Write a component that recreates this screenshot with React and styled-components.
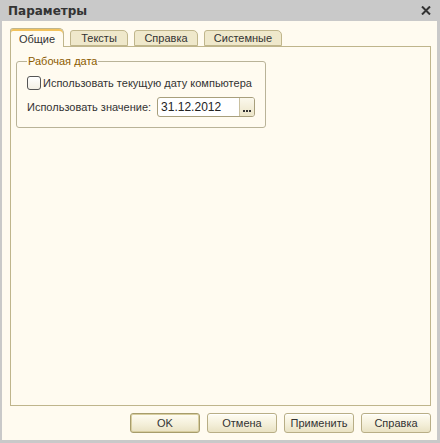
import React from "react";
import styled, { createGlobalStyle } from "styled-components";

const GlobalStyle = createGlobalStyle`
  html, body {
    margin: 0;
    padding: 0;
    background: #c9c9c9;
  }
  body {
    font-family: "Liberation Sans", sans-serif;
  }
`;

const Window = styled.div`
  width: 440px;
  height: 443px;
  box-sizing: border-box;
  display: flex;
  flex-direction: column;
  background: #c9c9c9;
  padding: 0 3px 3px 2px;
`;

const TitleBar = styled.div`
  height: 21px;
  display: flex;
  align-items: center;
  justify-content: space-between;
  padding: 0 6px 0 6px;
  font-family: "DejaVu Sans", sans-serif;
  font-weight: bold;
  font-size: 12px;
  color: #333;
`;

const Body = styled.div`
  flex: 1;
  display: flex;
  flex-direction: column;
  background: #fffbf0;
  padding: 7px 6px 0 8px;
`;

const TabRow = styled.div`
  display: flex;
  align-items: flex-end;
  gap: 6px;
  height: 18px;
  position: relative;
  z-index: 1;
`;

const Tab = styled.div`
  box-sizing: border-box;
  height: ${(p) => (p.$active ? "19px" : "16px")};
  margin-bottom: ${(p) => (p.$active ? "-1px" : "0")};
  width: ${(p) => p.$w}px;
  display: flex;
  align-items: center;
  justify-content: center;
  font-size: 11px;
  color: #333;
  border: 1px solid #c0b68c;
  border-bottom: ${(p) => (p.$active ? "none" : "1px solid #c0b68c")};
  border-radius: 3px 5px 0 0;
  background: ${(p) => (p.$active ? "#fffbf0" : "#efe8cb")};
  box-shadow: ${(p) => (p.$active ? "inset 0 2px 0 #f2c25c" : "none")};
  padding-top: ${(p) => (p.$active ? "1px" : "0")};
`;

const Page = styled.div`
  flex: 1;
  border: 1px solid #bfb58c;
  padding: 8px 0 0 5px;
`;

const Group = styled.fieldset`
  width: 250px;
  min-width: 0;
  box-sizing: border-box;
  margin: 0;
  padding: 9px 0 10px 10px;
  border: 1px solid #b9b398;
  border-radius: 3px;
  display: flex;
  flex-direction: column;
  gap: 7px;
`;

const Legend = styled.legend`
  padding: 0 1px;
  margin-left: 0;
  font-size: 11px;
  color: #8c5c00;
  line-height: 12px;
`;

const Row = styled.label`
  display: flex;
  align-items: center;
  white-space: nowrap;
  font-size: 11px;
  color: #333;
`;

const Box = styled.span`
  flex: none;
  width: 12px;
  height: 12px;
  border: 1px solid #555;
  border-radius: 3px;
  background: linear-gradient(#ffffff, #f3efe4);
  margin-right: 2px;
`;

const Field = styled.div`
  flex: none;
  display: flex;
  align-items: stretch;
  margin-left: 6px;
  width: 98px;
  height: 20px;
  box-sizing: border-box;
  border: 1px solid #a89f7c;
  border-radius: 3px;
  background: #fff;
  overflow: hidden;
`;

const FieldText = styled.span`
  flex: 1;
  display: flex;
  align-items: center;
  padding-left: 3px;
  font-size: 12px;
  color: #222;
`;

const Dots = styled.span`
  width: 15px;
  border-left: 1px solid #c9c0a0;
  background: linear-gradient(#fbf8ec, #ece5c8);
  display: flex;
  align-items: flex-end;
  justify-content: center;
  gap: 1px;
  padding-bottom: 4px;
  box-sizing: border-box;
`;

const Dot = styled.i`
  width: 2px;
  height: 2px;
  background: #333;
`;

const Footer = styled.div`
  display: flex;
  justify-content: flex-end;
  gap: 7px;
  padding: 7px 0 7px 0;
`;

const Button = styled.button`
  width: 70px;
  height: 20px;
  box-sizing: border-box;
  padding: 0;
  border: 1px solid ${(p) => (p.$default ? "#a79d6c" : "#b8ae86")};
  border-radius: 3px;
  background: linear-gradient(#fffdf3, #f3eed8 60%, #e9e2c3);
  box-shadow: ${(p) =>
    p.$default ? "inset 0 0 0 1px #d8cea0" : "inset 0 1px 0 #ffffff"};
  font-family: "Liberation Sans", sans-serif;
  font-size: 11px;
  color: #333;
`;

export default function App() {
  return (
    <>
      <GlobalStyle />
      <Window>
        <TitleBar>
          <span>Параметры</span>
          <svg width="10" height="9" viewBox="0 0 10 9">
            <path d="M1 0.5 L9 8.5 M9 0.5 L1 8.5" stroke="#333" strokeWidth="2" />
          </svg>
        </TitleBar>
        <Body>
          <TabRow>
            <Tab $active $w={54}>Общие</Tab>
            <Tab $w={58}>Тексты</Tab>
            <Tab $w={64}>Справка</Tab>
            <Tab $w={78}>Системные</Tab>
          </TabRow>
          <Page>
            <Group>
              <Legend>Рабочая дата</Legend>
              <Row>
                <Box />
                Использовать текущую дату компьютера
              </Row>
              <Row>
                Использовать значение:
                <Field>
                  <FieldText>31.12.2012</FieldText>
                  <Dots>
                    <Dot />
                    <Dot />
                    <Dot />
                  </Dots>
                </Field>
              </Row>
            </Group>
          </Page>
          <Footer>
            <Button $default>OK</Button>
            <Button>Отмена</Button>
            <Button>Применить</Button>
            <Button>Справка</Button>
          </Footer>
        </Body>
      </Window>
    </>
  );
}
